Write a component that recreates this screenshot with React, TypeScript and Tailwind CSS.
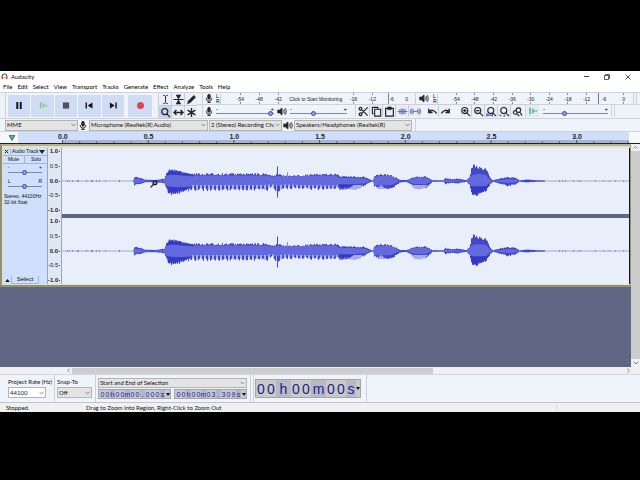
import type { ReactNode } from "react";
import { ChevronDown, ChevronLeft, ChevronRight, ChevronUp } from "lucide-react";

const UI = "font-['Lato','Noto_Sans',sans-serif]";
const ARIAL = "font-['Liberation_Sans',Arial,sans-serif]";

/* ---------- shared pieces ---------- */

function Grip() {
  return <span className="w-[6px] shrink-0 self-stretch border-r border-[#cdd1d8] bg-[#eef1f6]" />;
}

function Mic() {
  return (
    <svg viewBox="0 0 10 12" className="h-[9px] w-[8px] shrink-0" fill="none" stroke="#2a2a2a" strokeWidth="1.3">
      <rect x="3.4" y="0.5" width="3.2" height="6.4" rx="1.6" fill="#2a2a2a" />
      <path d="M1.4 5v1a3.6 3.6 0 0 0 7.2 0V5M5 9.6v2M2.8 11.4h4.4" />
    </svg>
  );
}

function Speaker() {
  return (
    <svg viewBox="0 0 14 12" className="h-[9px] w-[10px] shrink-0" fill="none" stroke="#2a2a2a" strokeWidth="1.1">
      <path d="M1 4v4h2.6L7 11V1L3.6 4z" fill="#2a2a2a" />
      <path d="M8.6 4q1.4 2 0 4M10 2.5q2.8 3.5 0 7M11.6 1.2q3.6 4.8 0 9.6" />
    </svg>
  );
}

function Slider({ label, value, className }: { label: string; value: number; className: string }) {
  return (
    <input
      type="range"
      aria-label={label}
      defaultValue={value}
      className={`m-0 block h-[5px] min-w-0 appearance-none bg-transparent [&::-webkit-slider-runnable-track]:h-px [&::-webkit-slider-runnable-track]:bg-[#7f86a0] [&::-webkit-slider-thumb]:mt-[-2px] [&::-webkit-slider-thumb]:size-[5px] [&::-webkit-slider-thumb]:appearance-none [&::-webkit-slider-thumb]:rounded-full [&::-webkit-slider-thumb]:border [&::-webkit-slider-thumb]:border-[#3d4bb4] [&::-webkit-slider-thumb]:bg-[#93a0e4] ${className}`}
    />
  );
}

function ToolbarSlider({ label, value, className }: { label: string; value: number; className: string }) {
  return (
    <div className={`flex flex-col ${className}`}>
      <div className={`flex h-[4px] items-center justify-between text-[6px] leading-none ${ARIAL}`}>
        <span>-</span>
        <span>+</span>
      </div>
      <Slider label={label} value={value} className="w-full" />
    </div>
  );
}

function Combo({ label, value, className, tone }: { label: string; value: string; className: string; tone: string }) {
  return (
    <div className={`relative ${className}`}>
      <select
        aria-label={label}
        className={`block h-full w-full appearance-none overflow-hidden border border-[#b4b4b4] pr-[7px] pl-px leading-none text-clip whitespace-nowrap text-[#111] ${tone}`}
      >
        <option>{value}</option>
      </select>
      <ChevronDown className="pointer-events-none absolute top-1/2 right-px size-[7px] -translate-y-1/2 text-[#444]" />
    </div>
  );
}

/* ---------- title and menu ---------- */

function TitleBar() {
  return (
    <header className="flex h-[11px] items-center bg-white pl-px text-[6px] text-black">
      <svg viewBox="0 0 16 14" className="mr-[3px] h-[7px] w-[7px]" fill="none">
        <path d="M2.5 8V6.500a5.500 5.500 0 0 1 11 0V8" stroke="#1c2a86" strokeWidth="2.200" />
        <rect x="1" y="7" width="4" height="6" rx="1.500" fill="#e2571c" />
        <rect x="11" y="7" width="4" height="6" rx="1.500" fill="#e2571c" />
        <path d="M6 10h4" stroke="#f2a31b" strokeWidth="3" />
      </svg>
      <h1 className="flex-1">Audacity</h1>
      <div className="flex items-center gap-[15px] pr-[9px]">
        <button aria-label="Minimize" className="flex w-[6px] justify-center">
          <span className="h-px w-[5px] bg-[#444]" />
        </button>
        <button aria-label="Restore">
          <svg viewBox="0 0 6 6" className="size-[6px]" fill="none" stroke="#333" strokeWidth="0.8">
            <path d="M0.5 1.500h4v4h-4zM1.500 1.500v-1h4v4h-1" />
          </svg>
        </button>
        <button aria-label="Close">
          <svg viewBox="0 0 6 6" className="size-[6px]" stroke="#333" strokeWidth="0.8">
            <path d="M0.500 0.500l5 5M5.500 0.500l-5 5" />
          </svg>
        </button>
      </div>
    </header>
  );
}

const MENUS = ["File", "Edit", "Select", "View", "Transport", "Tracks", "Generate", "Effect", "Analyze", "Tools", "Help"];

function MenuBar() {
  return (
    <nav className="flex h-[10px] items-center gap-[5px] bg-white pl-[3px] text-[6px] text-black">
      {MENUS.map((m) => (
        <button key={m}>{m}</button>
      ))}
    </nav>
  );
}

/* ---------- toolbars ---------- */

const TRANSPORT: { label: string; icon: ReactNode }[] = [
  { label: "Pause", icon: <path d="M4.500 3v10M9.500 3v10" stroke="#111" strokeWidth="2.800" /> },
  {
    label: "Play",
    icon: (
      <g fill="#86c796">
        <path d="M2.500 3.500h2.400v9H2.500zM6.500 4v8l4-4z" />
        <path d="M11 6l3 2-3 2z" />
      </g>
    ),
  },
  { label: "Stop", icon: <path d="M2.500 3.500h9v9h-9z" fill="#4f5358" /> },
  { label: "Skip to Start", icon: <path d="M2 3.500h2v9H2zM12 3.500v9L5 8z" fill="#111" /> },
  { label: "Skip to End", icon: <path d="M10.500 3.500h2v9h-2zM2.500 3.500v9l7-4.500z" fill="#111" /> },
];

function Transport() {
  return (
    <div className="flex items-center py-[2px] pl-[2px]">
      <div className="grid w-[116px] grid-cols-5 gap-px">
        {TRANSPORT.map((b) => (
          <button key={b.label} aria-label={b.label} className="grid h-[22px] place-items-center rounded-[1px] bg-[#cfdcf3]">
            <svg viewBox="0 0 14 16" className="h-[11px] w-[10px]">
              {b.icon}
            </svg>
          </button>
        ))}
      </div>
      <button aria-label="Record" className="ml-[4px] grid h-[22px] w-[24px] place-items-center rounded-[1px] bg-[#cfdcf3]">
        <span className="size-[7px] rounded-full bg-[#e0444c]" />
      </button>
    </div>
  );
}

const TOOLS: { label: string; icon: ReactNode; active?: boolean }[] = [
  { label: "Selection", icon: <path d="M3.500 1.500q2 0 2.500 1 .5-1 2.500-1M3.500 10.500q2 0 2.500-1 .5 1 2.500 1M6 2.500v7" strokeWidth="1" /> },
  { label: "Envelope", icon: <path d="M0.500 6h11M4 1.500L6 5l2-3.500zM4 10.500L6 7l2 3.500z" fill="#222" strokeWidth="1.100" /> },
  { label: "Draw", icon: <path d="M1.500 10.500l1-3 6-6 2 2-6 6z" fill="#222" strokeWidth="0.600" /> },
  { label: "Zoom", active: true, icon: <path d="M8.500 5a3.300 3.300 0 1 1-6.600 0 3.300 3.300 0 0 1 6.600 0zM7.500 7.500l3.200 3.500" strokeWidth="1.300" /> },
  { label: "Time Shift", icon: <path d="M1.500 6h9M3.800 3.200L1 6l2.800 2.800M8.200 3.200L11 6 8.200 8.800" strokeWidth="1.500" /> },
  { label: "Multi", icon: <path d="M6 1v10M1.700 3.500l8.600 5M1.700 8.500l8.600-5" strokeWidth="1.500" /> },
];

function Tools() {
  return (
    <div className="grid grid-cols-3 gap-px bg-[#c6cbd6]">
      {TOOLS.map((t) => (
        <button
          key={t.label}
          aria-label={t.label}
          aria-pressed={!!t.active}
          className={`grid h-[12px] w-[12px] place-items-center ${t.active ? "bg-[#c3d4f2]" : "bg-[#e9eef7]"}`}
        >
          <svg viewBox="0 0 12 12" className="size-[11px]" fill="none" stroke="#222">
            {t.icon}
          </svg>
        </button>
      ))}
    </div>
  );
}

function MeterLR() {
  return (
    <div className={`flex w-[5px] flex-col justify-between border-r border-[#c9ced8] text-[5px] leading-[5px] ${ARIAL}`}>
      <span>L</span>
      <span>R</span>
    </div>
  );
}

function Tick() {
  return <span className="h-[2px] w-px bg-[#8a8f9c]" />;
}

function MeterMark({ value }: { value: string }) {
  return (
    <span className="flex flex-col items-center justify-between">
      <Tick />
      <span>{value}</span>
      <Tick />
    </span>
  );
}

function RecordMeter() {
  return (
    <div className={`grid h-[11px] min-w-0 flex-1 grid-cols-[repeat(9,minmax(0,2fr))_minmax(0,1fr)] pl-[10px] text-[5px] leading-[6px] text-[#222] ${ARIAL}`}>
      <MeterMark value="-54" />
      <MeterMark value="-48" />
      <MeterMark value="-42" />
      <button className="col-span-3 grid place-items-center whitespace-nowrap">Click to Start Monitoring</button>
      <MeterMark value="-18" />
      <MeterMark value="-12" />
      <span className="flex justify-center">
        <span className="w-px bg-[#7684b4]" />
        <span className="self-center">-6</span>
      </span>
      <span className="flex items-center justify-end pr-[2px]">0</span>
    </div>
  );
}

const PLAY_MARKS = ["-54", "-48", "-42", "-36", "-30", "-24", "-18", "-12"];

function PlayMeter() {
  return (
    <div className={`grid h-[11px] min-w-0 flex-1 grid-cols-10 pl-[9px] text-[5px] leading-[6px] text-[#222] ${ARIAL}`}>
      {PLAY_MARKS.map((m) => (
        <MeterMark key={m} value={m} />
      ))}
      <span className="flex items-center gap-[3px]">
        <span className="ml-[2px] h-full w-px bg-[#6673c4]" />
        <span>-6</span>
      </span>
      <MeterMark value="0" />
    </div>
  );
}

const MAG = "M8.500 5a3.300 3.300 0 1 1-6.600 0 3.300 3.300 0 0 1 6.600 0zM7.500 7.500l3.500 3.500";

const EDIT: { label: string; icon: ReactNode }[] = [
  { label: "Cut", icon: <path d="M4 8L10.500 1.500M4 4l6.500 6.500M4.300 3a1.500 1.500 0 1 1-3 0 1.500 1.500 0 0 1 3 0zM4.300 9a1.500 1.500 0 1 1-3 0 1.500 1.500 0 0 1 3 0z" strokeWidth="1.300" /> },
  { label: "Copy", icon: <path d="M3 8.500H1.500v-7h6V3M4 3.500h6.500v7.500H4z" strokeWidth="1.200" /> },
  {
    label: "Paste",
    icon: (
      <g>
        <path d="M1.800 2.500h8.400V11H1.800z" strokeWidth="1.300" />
        <path d="M4 1h4v3H4z" fill="#222" strokeWidth="0.500" />
      </g>
    ),
  },
  {
    label: "Trim",
    icon: <path d="M0.500 6h11M3 3.500v5M4.500 2.500v7M6 3.500v5M7.500 2.500v7M9 3.500v5" stroke="#5b69bd" />,
  },
  {
    label: "Silence",
    icon: <path d="M3.500 6h5M0.500 4v4M2 2.500v7M3.500 3.500v5M8.500 3.500v5M10 2.500v7M11.500 4v4" stroke="#5b69bd" />,
  },
];

const HISTORY = [
  { label: "Undo", icon: <path d="M2 3v4h4M2 7q4-5 8.500 1" strokeWidth="1.600" /> },
  { label: "Redo", icon: <path d="M10 3v4H6M10 7Q6 2 1.500 8" strokeWidth="1.600" /> },
];

const ZOOMS = [
  { label: "Zoom In", icon: <path d={`${MAG}M3.400 5h3.600M5.200 3.200v3.600`} strokeWidth="1.200" /> },
  { label: "Zoom Out", icon: <path d={`${MAG}M3.400 5h3.600`} strokeWidth="1.200" /> },
  {
    label: "Fit Selection",
    icon: (
      <g strokeWidth="1.200">
        <path d={MAG} />
        <path d="M1 8v3.500M1 10h5M7 8.500v3" stroke="#3d4bb4" />
      </g>
    ),
  },
  {
    label: "Fit Project",
    icon: (
      <g strokeWidth="1.200">
        <path d={MAG} />
        <path d="M0.500 9.500l2 1.500M5 11.500l2-1.500" stroke="#3d4bb4" />
      </g>
    ),
  },
  { label: "Zoom Toggle", icon: <path d="M9.500 4.500a2.500 2.500 0 1 1-5 0 2.500 2.500 0 0 1 5 0zM5.500 7a2 2 0 1 1-4 0 2 2 0 0 1 4 0zM8.500 6.500l2.500 4M5 8.500l3 2.500" strokeWidth="1.200" /> },
];

function IconButtons({ items }: { items: { label: string; icon: ReactNode }[] }) {
  return (
    <div className="flex gap-px bg-[#c6cbd6]">
      {items.map((b) => (
        <button key={b.label} aria-label={b.label} className="grid h-[12px] w-[12px] place-items-center bg-[#e9eef7]">
          <svg viewBox="0 0 12 12" className="size-[11px]" fill="none" stroke="#222">
            {b.icon}
          </svg>
        </button>
      ))}
    </div>
  );
}

function Toolbars() {
  return (
    <div className="flex h-[26px] border-t border-[#cdd1d8] bg-[#eff3fa]">
      <Grip />
      <Transport />
      <span className="w-px" />
      <Grip />
      <Tools />
      <div className="flex min-w-0 flex-1 flex-col divide-y divide-[#cdd1d8]">
        <div className="flex h-[12px] items-center">
          <div className="flex h-full w-[213px] shrink-0 items-center">
            <Grip />
            <span className="w-[2px]" />
            <Mic />
            <span className="w-[3px]" />
            <MeterLR />
            <RecordMeter />
          </div>
          <Grip />
          <span className="w-[3px]" />
          <Speaker />
          <span className="w-[4px]" />
          <MeterLR />
          <PlayMeter />
          <span className="w-[4px] self-stretch border-x border-[#cdd1d8]" />
          <span className="w-[3px]" />
        </div>
        <div className="flex h-[12px] items-center">
          <Grip />
          <span className="w-[2px]" />
          <Mic />
          <ToolbarSlider label="Recording volume" value={98} className="mx-[3px] w-[58px]" />
          <Speaker />
          <ToolbarSlider label="Playback volume" value={40} className="mx-[3px] w-[57px]" />
          <Grip />
          <span className="w-px" />
          <IconButtons items={EDIT} />
          <span className="w-[5px]" />
          <IconButtons items={HISTORY} />
          <span className="w-[8px]" />
          <IconButtons items={ZOOMS} />
          <span className="w-[3px] self-stretch border-r border-[#cdd1d8]" />
          <button aria-label="Play at speed" className="ml-px grid h-[12px] w-[12px] place-items-center bg-[#e2eaf5]">
            <svg viewBox="0 0 12 12" className="size-[10px]" fill="#62b57c">
              <path d="M1.500 2h2v8h-2zM5 2.500v7L8.500 6zM9 4.500L11.500 6 9 7.500z" />
            </svg>
          </button>
          <ToolbarSlider label="Playback speed" value={32} className="ml-[4px] w-[65px]" />
          <span className="ml-[3px] w-[4px] self-stretch border-x border-[#cdd1d8]" />
        </div>
      </div>
    </div>
  );
}

function DeviceBar() {
  return (
    <div className="flex h-[13px] items-center border-t border-[#cdd1d8] bg-[#eff3fa] text-[6px]">
      <span className="w-[5px]" />
      <Combo label="Audio host" value="MME" className="h-[11px] w-[73px]" tone="bg-[#e4e4e4]" />
      <span className="w-px" />
      <Mic />
      <span className="w-[2px]" />
      <Combo label="Recording device" value="Microphone (Realtek(R) Audio)" className="h-[11px] w-[119px]" tone="bg-[#e4e4e4]" />
      <span className="w-px" />
      <Combo label="Recording channels" value="2 (Stereo) Recording Channels" className="h-[11px] w-[73px]" tone="bg-[#e4e4e4]" />
      <span className="w-px" />
      <Speaker />
      <span className="w-px" />
      <Combo label="Playback device" value="Speakers/Headphones (Realtek(R)" className="h-[11px] w-[118px]" tone="bg-[#e4e4e4]" />
      <span className="ml-px w-[3px] self-stretch border-r border-[#cdd1d8]" />
    </div>
  );
}

/* ---------- timeline ---------- */

const SECONDS = ["0.0", "0.5", "1.0", "1.5", "2.0", "2.5", "3.0"];

function Timeline() {
  const ticks = Array.from({ length: 34 }, (_, i) => {
    const x = 44.5 + i * 17.14;
    return `M${x} ${i % 5 === 0 ? 0 : 2}V4`;
  }).join("");
  return (
    <div className="flex h-[13px] border-y border-t-[#cdd1d8] border-b-[#222] bg-[#f6f8fc]">
      <button aria-label="Pinned play head" className="grid w-[18px] place-items-center pl-[6px]">
        <svg viewBox="0 0 8 7" className="h-[6px] w-[8px]">
          <path d="M0.700 0.700h6.600L4 6.300z" fill="#62b57c" stroke="#245c38" strokeWidth="0.900" />
        </svg>
      </button>
      <div className="flex min-w-0 flex-1 flex-col bg-[#d0defc]">
        <div className={`grid h-[8px] grid-cols-7 pt-px pr-[9px] pl-[2px] text-center text-[7px] leading-[8px] font-bold text-[#222] ${ARIAL}`}>
          {SECONDS.map((s) => (
            <span key={s}>{s}</span>
          ))}
        </div>
        <svg viewBox="0 0 611 4" preserveAspectRatio="none" className="h-[3px] w-full">
          <path d="M44 0h567v4H44z" fill="#a6b4d4" />
          <path d={ticks} stroke="#3b4358" strokeWidth="1" />
        </svg>
      </div>
      <span className="w-[11px]" />
    </div>
  );
}

/* ---------- waveform ---------- */

/* x, peak above, peak below, rms above, rms below */
const ENVELOPE = [
  [0, 0.5, 0.5, 0, 0],
  [71, 0.6, 0.6, 0, 0],
  [72, 4.500, 4.500, 2.500, 2.500],
  [78, 3, 3, 1.800, 1.800],
  [83, 1.400, 1.400, 0.400, 0.400],
  [93, 1.200, 1.200, 0.300, 0.300],
  [102, 2.500, 2.500, 1, 1],
  [104, 8, 8, 5, 5],
  [107, 11.500, 14, 6, 6],
  [114, 11, 13.500, 6, 6.500],
  [122, 9.500, 10, 5.500, 6],
  [130, 7.500, 9.500, 5.500, 5],
  [205, 7.500, 9.500, 5.500, 5],
  [209, 5.500, 5.500, 4.500, 4],
  [213, 6, 10, 4.500, 5],
  [214, 7, 10, 5, 5],
  [215, 15, 17, 5, 5],
  [216, 7, 10, 5, 5],
  [222, 5.500, 8, 4.500, 4.500],
  [240, 6, 8, 5, 5],
  [250, 7, 8.500, 5.500, 5],
  [274, 7.500, 8.500, 5.500, 5.500],
  [277, 5, 8, 3, 3],
  [290, 4.500, 7.500, 3, 3],
  [302, 4.500, 5, 2.500, 2.500],
  [309, 0.800, 0.800, 0, 0],
  [311, 0.700, 0.700, 0, 0],
  [312, 5.500, 5.500, 4, 4],
  [317, 7, 8, 5, 4.500],
  [329, 6, 8, 5, 4],
  [338, 1, 1.500, 0, 0],
  [344, 1, 1, 0, 0],
  [352, 4.500, 5.500, 3, 3],
  [364, 4.500, 7, 3, 3],
  [370, 0.800, 0.800, 0, 0],
  [381, 0.700, 0.700, 0, 0],
  [383, 3, 3, 1, 1],
  [389, 2, 2, 0.800, 0.800],
  [396, 2.500, 2.500, 0.800, 0.800],
  [404, 0.800, 0.800, 0, 0],
  [407, 4, 4, 3, 3],
  [409, 13, 14, 5, 5],
  [412, 17, 16, 6.500, 6],
  [417, 14, 13, 7, 6],
  [424, 12, 11, 6, 5],
  [428, 3, 3, 1.500, 1.500],
  [431, 0.700, 0.700, 0, 0],
  [438, 3, 3, 1, 1],
  [446, 4, 5.500, 2, 2],
  [454, 3, 3, 1.500, 1.500],
  [457, 0.600, 0.600, 0, 0],
  [464, 1.600, 1.600, 0, 0],
  [476, 0.700, 0.700, 0, 0],
  [500, 0.500, 0.500, 0, 0],
  [567, 0.400, 0.400, 0, 0],
];

function sample(x: number): number[] {
  let i = 1;
  while (i < ENVELOPE.length - 1 && ENVELOPE[i][0] < x) i++;
  const a = ENVELOPE[i - 1];
  const b = ENVELOPE[i];
  const t = Math.min(1, Math.max(0, (x - a[0]) / (b[0] - a[0])));
  return [1, 2, 3, 4].map((k) => a[k] + (b[k] - a[k]) * t);
}

function noise(n: number): number {
  const v = Math.sin(n * 127.1) * 43758.5453;
  return v - Math.floor(v);
}

const MID = 33;

function buildWave() {
  let dark = "";
  let light = "";
  let above = "";
  let below = "";
  for (let x = 0; x < 567; x++) {
    const [up, down, rmsUp, rmsDown] = sample(x);
    above += `L${x} ${(MID - rmsUp).toFixed(1)}`;
    below = `L${x} ${(MID + rmsDown).toFixed(1)}${below}`;
    if (up < 0.65 && noise(x + 50) < 0.8) continue;
    const striped = x > 127 && x < 276 && x !== 215;
    const u = up * (0.76 + 0.3 * noise(x));
    const d = down * (0.76 + 0.3 * noise(x + 900));
    const lit = striped && x % 4 > 1;
    dark += `M${x + 0.5} ${(MID - u).toFixed(1)}V${(MID + (lit ? rmsDown : d)).toFixed(1)}`;
    if (lit) light += `M${x + 0.5} ${(MID + rmsDown - 1).toFixed(1)}V${(MID + d * 0.9).toFixed(1)}`;
  }
  return { dark, light, rms: `M0 ${MID}${above}${below}Z` };
}

const WAVE = buildWave();

function Waveform() {
  return (
    <svg viewBox="0 0 567 66" preserveAspectRatio="none" className="block min-h-0 w-full flex-1 bg-[#e8effb]" aria-hidden="true">
      <path d="M0 33h567" stroke="#8a8cc0" strokeWidth="0.700" />
      <path d={WAVE.dark} stroke="#4347cb" strokeWidth="1" />
      <path d={WAVE.rms} fill="#6469dd" />
      <path d={WAVE.light} stroke="#a9b0f0" strokeWidth="1" />
      <path d="M104 38L114 39 126 39 122 43 112 46 106 45zM408 38h19l-4 5-8 4-5-1zM277 37l13 0-3 4-10 1z" fill="#2c30c4" fillOpacity="0.600" />
      <path d="M286 41l6-4h8l-1 3-6 2zM315 41l4-4 5 4zM349 37h17l-3 3-6 1.500-5-1z" fill="#a5abee" />
      <path d="M225.500 24v5" stroke="#8b93d8" strokeWidth="1" />
      <path d="M106 22.500l6-1 10 3 10 2v2l-10-1-12-1.500-5 1z" fill="#2c30c4" fillOpacity="0.600" />
    </svg>
  );
}

const SCALE = ["1.0", "0.5", "0.0", "-0.5", "-1.0"];

function VerticalScale() {
  return (
    <div className="flex flex-1 flex-col justify-between pr-px">
      {SCALE.map((v, i) => (
        <span key={v} className={`flex items-center justify-end gap-px leading-[7px] ${i % 2 === 0 ? "font-bold" : ""}`}>
          {v}
          <span className="h-px w-px bg-[#444]" />
        </span>
      ))}
    </div>
  );
}

function TrackPanel() {
  return (
    <section
      aria-label="Audio Track"
      className={`flex w-[45px] shrink-0 flex-col border-r border-[#9aa4bd] bg-[#cfe0fc] text-[5px] leading-[7px] text-[#111] ${ARIAL}`}
    >
      <div className="flex h-[8px] items-center border-b border-[#a9b4cc]">
        <button aria-label="Close track" className="grid w-[8px] place-items-center border-r border-[#a9b4cc]">
          <svg viewBox="0 0 6 6" className="size-[5px]" stroke="#222" strokeWidth="1.200">
            <path d="M1 1l4 4M5 1L1 5" />
          </svg>
        </button>
        <button className="flex flex-1 items-center justify-between pr-[2px] pl-px whitespace-nowrap">
          Audio Track
          <svg viewBox="0 0 6 4" className="h-[4px] w-[6px]">
            <path d="M0 0h6L3 4z" fill="#222" />
          </svg>
        </button>
      </div>
      <div className="grid h-[8px] grid-cols-2 divide-x divide-[#a9b4cc] border-b border-[#a9b4cc]">
        <button>Mute</button>
        <button>Solo</button>
      </div>
      <div className="mt-px px-[5px]">
        <div className="flex h-[5px] items-center justify-between">
          <span>-</span>
          <span>+</span>
        </div>
        <Slider label="Gain" value={48} className="w-full" />
        <div className="mt-[3px] flex h-[6px] items-center justify-between">
          <span>L</span>
          <span>R</span>
        </div>
        <Slider label="Pan" value={48} className="w-full" />
      </div>
      <div className="mt-[4px] pl-px leading-[6px] whitespace-nowrap">
        <p>Stereo, 44100Hz</p>
        <p>32-bit float</p>
      </div>
      <div className="mt-auto flex h-[8px] items-center">
        <button aria-label="Collapse" className="grid h-full w-[9px] place-items-center border-r border-[#a9b4cc]">
          <svg viewBox="0 0 6 4" className="h-[3px] w-[5px]">
            <path d="M0 4h6L3 0z" fill="#111" />
          </svg>
        </button>
        <button className="h-full w-[27px] border-r border-b border-[#a9b4cc] text-[6px]">Select</button>
      </div>
    </section>
  );
}

function Track() {
  return (
    <div className="flex h-[143px] border-y-2 border-r border-l-2 border-[#918f74] border-t-[#b3b19a] bg-[#e6e3b4] pt-[2px] pb-px pl-px">
      <TrackPanel />
      <div className={`flex w-[14px] shrink-0 flex-col gap-[4px] border-r border-[#9aa4bd] bg-[#e1e8f4] text-[6px] text-[#222] ${ARIAL}`}>
        <VerticalScale />
        <VerticalScale />
      </div>
      <div className="relative flex min-w-0 flex-1 flex-col gap-[4px] border-r border-[#1b1b1b] bg-[#5f6684]">
        <Waveform />
        <Waveform />
        <svg viewBox="0 0 9 9" className="absolute top-[32px] left-[88px] size-[8px]" fill="#8a91c8" stroke="#111" strokeWidth="1.300">
          <circle cx="5.600" cy="3.200" r="2.200" />
          <path d="M4 4.800L0.700 8.300" />
        </svg>
      </div>
    </div>
  );
}

function TrackArea() {
  return (
    <main className="flex min-h-0 flex-1">
      <div className="flex min-w-0 flex-1 flex-col bg-[#5f6684]">
        <Track />
      </div>
      <div className="flex w-[9px] flex-col items-center bg-[#f0f0f0]">
        <ChevronUp className="size-[7px] text-[#444]" />
        <span className="w-full flex-1 bg-[#cdcdcd]" />
        <ChevronDown className="size-[8px] text-[#444]" />
      </div>
    </main>
  );
}

function HorizontalScroll() {
  return (
    <div className="flex h-[8px] items-center border-b border-[#d8d8d8] bg-[#f0f0f0]">
      <span className="w-[65px]" />
      <ChevronLeft className="size-[7px] text-[#444]" />
      <span className="h-[6px] w-[361px] bg-[#cdcdcd]" />
      <ChevronRight className="mr-[8px] ml-auto size-[7px] text-[#444]" />
    </div>
  );
}

/* ---------- bottom bars ---------- */

function TimeCells({ text, digit, unit }: { text: string; digit: string; unit: string }) {
  return (
    <>
      {text.split("").map((c, i) => (
        <span key={i} className={`flex h-full items-center justify-center ${/[0-9]/.test(c) ? digit : unit}`}>
          {c}
        </span>
      ))}
      <svg viewBox="0 0 4 3" className="ml-auto h-[3px] w-[4px]">
        <path d="M0 0h4L2 3z" fill="#111" />
      </svg>
    </>
  );
}

function SmallTime({ text }: { text: string }) {
  return (
    <div className={`flex h-[10px] w-[73px] items-center border border-[#a5a5a5] bg-[#c9c9cd] pl-px text-[7px] leading-none text-[#1c1f86] ${ARIAL}`}>
      <TimeCells text={text} digit="w-[5px] bg-[#c5c6dc]" unit="w-[5px] bg-[#b3b5cb]" />
    </div>
  );
}

function SelectionBar() {
  return (
    <div className={`flex h-[27px] items-stretch bg-[#eff3fa] text-[6px] text-[#111] ${UI}`}>
      <div className="flex w-[46px] flex-col justify-center gap-[2px] pl-[8px] whitespace-nowrap">
        <span>Project Rate (Hz)</span>
        <Combo label="Project Rate (Hz)" value="44100" className="h-[11px] w-[38px]" tone="bg-white" />
      </div>
      <span className="ml-[8px] w-px bg-[#cdd1d8]" />
      <div className="flex flex-col justify-center gap-[2px] pl-[2px]">
        <span>Snap-To</span>
        <Combo label="Snap-To" value="Off" className="h-[11px] w-[35px]" tone="bg-[#e4e4e4]" />
      </div>
      <span className="ml-[3px] w-px bg-[#cdd1d8]" />
      <div className="flex flex-col justify-center gap-px pl-[2px]">
        <Combo label="Selection mode" value="Start and End of Selection" className="h-[10px] w-[149px]" tone="bg-[#e4e4e4]" />
        <div className="flex justify-between">
          <SmallTime text="00h00m00.000s" />
          <SmallTime text="00h00m03.309s" />
        </div>
      </div>
      <span className="ml-[3px] w-[4px] border-x border-[#cdd1d8]" />
      <div className="flex items-center px-px">
        <div className={`flex h-[19px] w-[106px] items-center border border-[#a5a5a5] bg-[#c9c9c9] text-[14px] leading-none text-[#1c1f86] ${ARIAL}`}>
          <TimeCells text="00h00m00s" digit="w-[10px]" unit="w-[15px] bg-[#b7b8c8] last-of-type:w-[10px]" />
        </div>
      </div>
      <span className="ml-[4px] w-px bg-[#cdd1d8]" />
    </div>
  );
}

function StatusBar() {
  return (
    <footer className="flex h-[10px] items-center border-t border-[#c4c4c4] bg-[#f0f0f0] text-[6px] text-[#111]">
      <span className="w-[86px] pl-[6px]">Stopped.</span>
      <span className="flex-1">Drag to Zoom Into Region, Right-Click to Zoom Out</span>
      <span className="w-[84px] self-stretch border-l border-[#dcdcdc]" />
    </footer>
  );
}

export default function App() {
  return (
    <div className="flex min-h-screen flex-col bg-black pt-[71px] pb-[68px]">
      <div className={`flex flex-1 flex-col overflow-hidden bg-[#eff3fa] leading-none ${UI}`}>
        <TitleBar />
        <MenuBar />
        <Toolbars />
        <DeviceBar />
        <Timeline />
        <TrackArea />
        <HorizontalScroll />
        <SelectionBar />
        <StatusBar />
      </div>
    </div>
  );
}
